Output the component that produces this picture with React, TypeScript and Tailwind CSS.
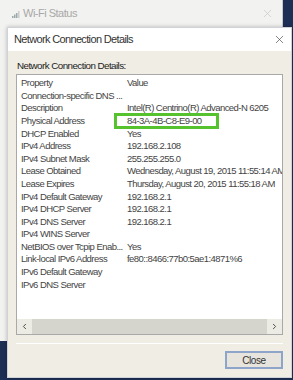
import { X, ChevronLeft, ChevronRight } from "lucide-react";

const rows: [string, string][] = [
  ["Connection-specific DNS ...", ""],
  ["Description", "Intel(R) Centrino(R) Advanced-N 6205"],
  ["Physical Address", "84-3A-4B-C8-E9-00"],
  ["DHCP Enabled", "Yes"],
  ["IPv4 Address", "192.168.2.108"],
  ["IPv4 Subnet Mask", "255.255.255.0"],
  ["Lease Obtained", "Wednesday, August 19, 2015 11:55:14 AM"],
  ["Lease Expires", "Thursday, August 20, 2015 11:55:18 AM"],
  ["IPv4 Default Gateway", "192.168.2.1"],
  ["IPv4 DHCP Server", "192.168.2.1"],
  ["IPv4 DNS Server", "192.168.2.1"],
  ["IPv4 WINS Server", ""],
  ["NetBIOS over Tcpip Enab...", "Yes"],
  ["Link-local IPv6 Address", "fe80::8466:77b0:5ae1:4871%6"],
  ["IPv6 Default Gateway", ""],
  ["IPv6 DNS Server", ""],
];

const Row = ({ prop, value }: { prop: string; value: string }) => (
  <div className="flex h-[12.6px] items-center whitespace-nowrap">
    <span className="w-[106px] shrink-0">{prop}</span>
    <span>{value}</span>
  </div>
);

export default function App() {
  return (
    <div
      className="relative w-[293px] h-[380px] overflow-hidden bg-[#1d2f55] text-[#444]"
      style={{ fontFamily: '"Liberation Sans", Arial, sans-serif' }}
    >
      {/* background window */}
      <div className="absolute left-0 top-0 w-[283px] h-[341px] bg-[#f2f2f0] border-r border-[#c8c8c8]">
        <div className="flex items-center h-[26px] pl-[12px] pr-[8px]">
          <svg width="8" height="7" viewBox="0 0 8 7" className="mr-[3px] mt-[3px]">
            <rect x="0" y="5" width="1.5" height="2" fill="#9aa" />
            <rect x="2" y="3.5" width="1.5" height="3.5" fill="#9aa" />
            <rect x="4" y="2" width="1.5" height="5" fill="#9aa" />
            <rect x="6" y="0" width="1.5" height="7" fill="#ccc" />
          </svg>
          <span className="text-[11px] tracking-[-0.5px] text-[#a8a8a8]">Wi-Fi Status</span>
          <X className="ml-auto text-[#c4c4c4]" size={13} strokeWidth={1.2} />
        </div>
      </div>

      {/* dialog */}
      <div className="absolute left-[7px] top-[27px] w-[285px] h-[351px] flex flex-col bg-[#efede4] border border-[#cfd2d8] shadow-[0_0_4px_rgba(0,0,0,0.25)]">
        <div className="flex items-center h-[23px] bg-white pl-[6px] pr-[5px] shrink-0">
          <span className="text-[11px] tracking-[-0.65px] text-[#333]">Network Connection Details</span>
          <X className="ml-auto text-[#444]" size={13} strokeWidth={1.2} />
        </div>
        <div className="flex flex-col px-[8px] pt-[8px] flex-1">
          <div className="text-[9.8px] tracking-[-0.55px] text-[#222] leading-[13px] pl-[1px]">
            Network Connection Details:
          </div>
          <div className="relative mt-[2px] h-[261px] bg-white border border-[#a9a9a9] flex flex-col text-[9.5px] tracking-[-0.55px]">
            <div className="flex-1 overflow-hidden pl-[4px] pt-[2px]">
              <Row prop="Property" value="Value" />
              {rows.map(([p, v]) => (
                <Row key={p} prop={p} value={v} />
              ))}
            </div>
            <div className="flex h-[15px] bg-[#d6d5cd] shrink-0">
              <div className="w-[15px] bg-[#ecebe4] flex items-center justify-center">
                <ChevronLeft size={9} strokeWidth={2.5} className="text-[#444]" />
              </div>
              <div className="flex-1" />
              <div className="w-[15px] bg-[#ecebe4] flex items-center justify-center">
                <ChevronRight size={9} strokeWidth={2.5} className="text-[#444]" />
              </div>
            </div>
            <div className="absolute left-[97px] top-[38px] w-[105px] h-[16px] border-[3px] border-[#55c22e]" />
          </div>
          <div className="mt-[8px] h-px bg-[#cfcdc4] border-b border-white" />
          <div className="flex justify-end mt-[7px]">
            <button className="w-[58px] h-[18px] bg-[#e6e4dc] border-2 border-[#8ea4c8] text-[10px] tracking-[-0.4px] text-[#333]">
              Close
            </button>
          </div>
        </div>
      </div>
    </div>
  );
}
